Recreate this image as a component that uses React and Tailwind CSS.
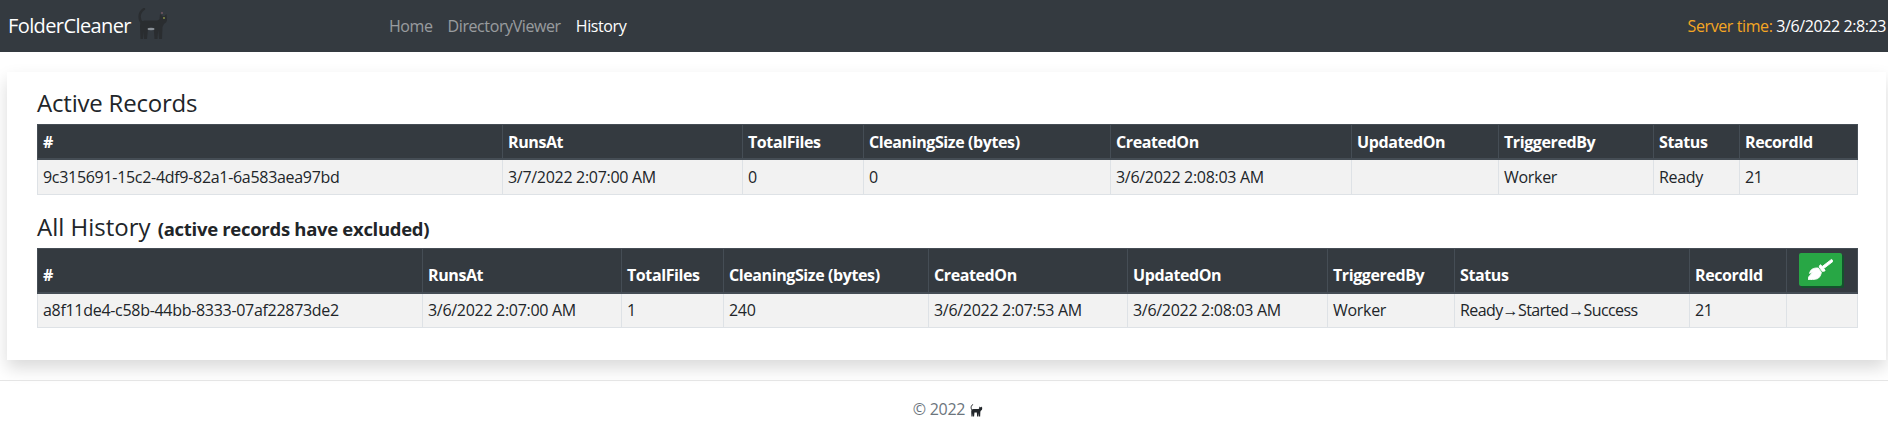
import React from 'react';
import { FaBroom } from 'react-icons/fa';

const CatIcon = ({ className, detail }) => (
  <svg viewBox="0 0 32 32" className={className} fill="currentColor">
    <path d="M6 16C1.500 12 1 5 7 1" fill="none" stroke="currentColor" strokeWidth="2.400" strokeLinecap="round" />
    <path d="M4 14c1-1 3-1.500 5-1.500h10c1.500 0 2.500-.5 3.500-1.500l.5-5 2.500 2h2l2-2 .5 5c.3 2-1 4-3 5l-1.500 3-.5 12h-3l-.8-9-.7 9h-3l-.7-10H11l-1 10H7l-.5-8-.5 8H3.500L3 19c0-2 .2-3.800 1-5z" />
    {detail && <ellipse cx="14" cy="21" rx="3.500" ry="1.200" fill="#8a9097" />}
    {detail && <circle cx="27" cy="10" r="0.900" fill="#8f9a4a" />}
    {detail && <circle cx="25" cy="5" r="0.900" fill="#7a5a66" />}
  </svg>
);

const activeCols = [
  ['#', 'w-[465px]'],
  ['RunsAt', 'w-[240px]'],
  ['TotalFiles', 'w-[121px]'],
  ['CleaningSize (bytes)', 'w-[247px]'],
  ['CreatedOn', 'w-[241px]'],
  ['UpdatedOn', 'w-[147px]'],
  ['TriggeredBy', 'w-[155px]'],
  ['Status', 'w-[86px]'],
  ['RecordId', 'w-[118px]'],
];
const activeRow = ['9c315691-15c2-4df9-82a1-6a583aea97bd', '3/7/2022 2:07:00 AM', '0', '0', '3/6/2022 2:08:03 AM', '', 'Worker', 'Ready', '21'];

const historyCols = [
  ['#', 'w-[385px]'],
  ['RunsAt', 'w-[199px]'],
  ['TotalFiles', 'w-[102px]'],
  ['CleaningSize (bytes)', 'w-[205px]'],
  ['CreatedOn', 'w-[199px]'],
  ['UpdatedOn', 'w-[200px]'],
  ['TriggeredBy', 'w-[127px]'],
  ['Status', 'w-[235px]'],
  ['RecordId', 'w-[97px]'],
  ['', 'w-[71px]'],
];
const historyRow = ['a8f11de4-c58b-44bb-8333-07af22873de2', '3/6/2022 2:07:00 AM', '1', '240', '3/6/2022 2:07:53 AM', '3/6/2022 2:08:03 AM', 'Worker', 'Ready→Started→Success', '21', ''];

const RecordsTable = ({ cols, row, action }) => (
  <table className="w-[1820px] table-fixed border-collapse text-[16px] text-[#212529]">
    <thead>
      <tr className="bg-[#343a40] text-white">
        {cols.map(([name, width], i) => (
          <th key={i} className={`${width} border border-[#454d55] border-b-2 px-[5px] py-[4.5px] text-left align-bottom font-bold leading-[24px] tracking-[-0.4px]`}>
            {name === '' && action ? action : name}
          </th>
        ))}
      </tr>
    </thead>
    <tbody>
      <tr className="bg-[#f2f2f2]">
        {row.map((value, i) => (
          <td key={i} className={`h-[35px] border border-[#dee2e6] px-[5px] py-[4px] leading-[24px] ${value.includes('→') ? 'tracking-[-0.6px]' : ''}`}>{value}</td>
        ))}
      </tr>
    </tbody>
  </table>
);

const App = () => {
  return (
    <div className="h-[430px] overflow-hidden bg-white font-['Open_Sans','Liberation_Sans',sans-serif] tracking-[-0.3px]">
      {/* Navbar */}
      <header className="flex h-[52px] items-center bg-[#343a40] pl-2 pr-[2px] text-white">
        <span className="text-[20px] tracking-[-0.6px]">FolderCleaner</span>
        <CatIcon detail className="ml-[6px] mb-[4px] h-[32px] w-[32px] text-[#2a2d30]" />
        <nav className="ml-[220px] flex gap-[15px] text-[16px] tracking-[-0.4px]">
          <span className="text-white/50">Home</span>
          <span className="text-white/50">DirectoryViewer</span>
          <span>History</span>
        </nav>
        <div className="ml-auto text-[16px] tracking-[-0.4px]">
          <span className="text-[#f5a623]">Server time: </span>3/6/2022 2:8:23
        </div>
      </header>

      {/* Card */}
      <main className="ml-[7px] mr-[2px] mt-5 h-[288px] bg-white px-[30px] pt-[14px] shadow-[0_8px_16px_rgba(0,0,0,0.15)]">
        <h2 className="mb-[4px] h-[34px] text-[24px] font-medium leading-[34px] tracking-[-0.2px] text-[#212529]">Active Records</h2>
        <RecordsTable cols={activeCols} row={activeRow} />

        <h2 className="mb-[3px] mt-[14px] h-[36px] text-[24px] font-medium leading-[36px] tracking-normal text-[#212529]">
          All History <small className="ml-[1px] text-[18.5px] font-bold tracking-[-0.3px]">(active records have excluded)</small>
        </h2>
        <RecordsTable
          cols={historyCols}
          row={historyRow}
          action={
            <button className="mb-[1px] ml-[7px] flex h-[33px] w-[43px] items-center justify-center rounded-[2px] bg-[#28a745] shadow-[2px_2px_0_#14532d]">
              <FaBroom className="h-[25px] w-[25px] text-white" stroke="currentColor" strokeWidth={24} />
            </button>
          }
        />
      </main>

      {/* Footer */}
      <footer className="mt-5 flex h-[56px] items-center justify-center border-t border-[#e5e5e5] pl-[8px] text-[16px] text-[#6c757d]">
        <span>© 2022</span>
        <CatIcon className="ml-[5px] mt-[3px] h-[13px] w-[13px] text-[#212529]" />
      </footer>
    </div>
  );
};

export default App;
